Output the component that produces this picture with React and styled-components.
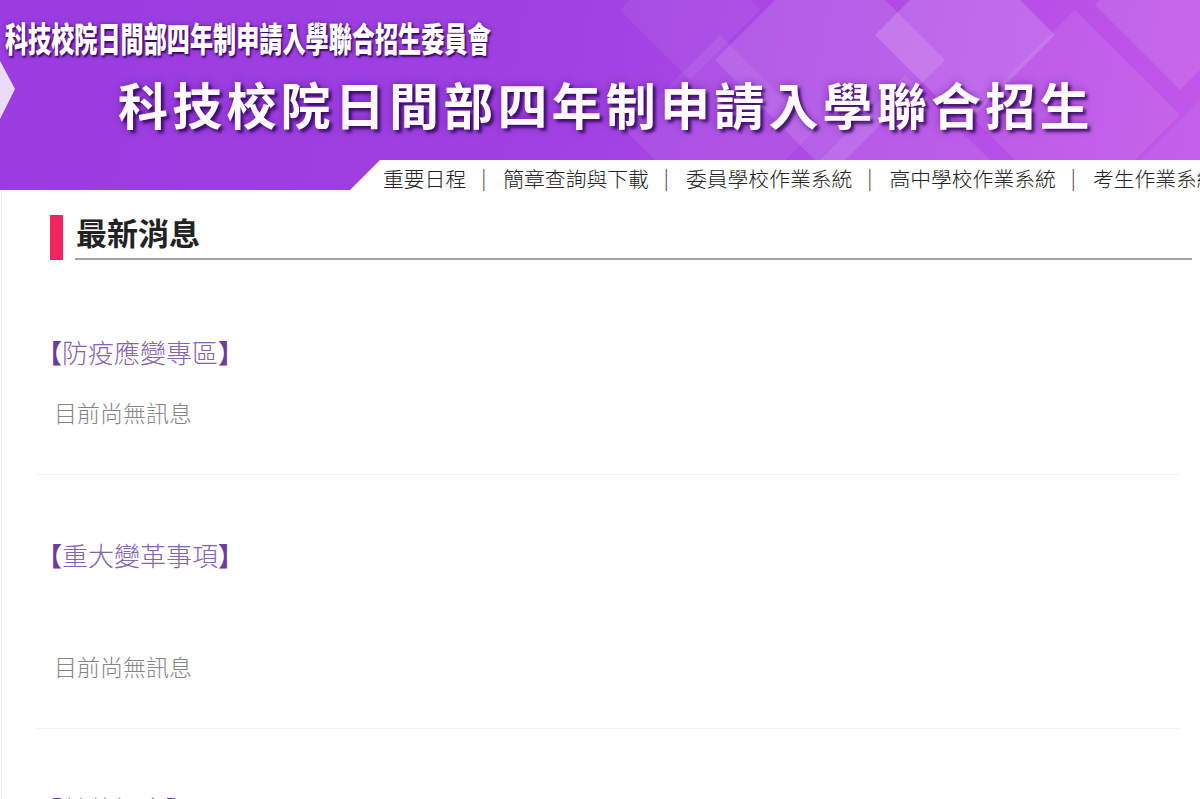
import React from 'react'
import styled, { createGlobalStyle } from 'styled-components'

const GlobalStyle = createGlobalStyle`
  html, body {
    margin: 0;
    padding: 0;
    background: #fff;
    overflow: hidden;
  }
  body {
    font-family: "Noto Sans CJK TC", "Noto Sans", sans-serif;
  }
`

const CJK = `"Noto Sans CJK TC", "Noto Sans CJK SC", "Noto Sans", sans-serif`

const Banner = styled.header`
  position: relative;
  height: 190px;
  background: linear-gradient(100deg, #9a3cdf 0%, #9f40e2 45%, #b24ce6 75%, #c257e9 100%);
  display: flex;
  flex-direction: column;
`

const BannerArt = styled.svg`
  position: absolute;
  inset: 0;
  width: 100%;
  height: 100%;
`

const SubTitle = styled.div`
  position: relative;
  margin: 20px 0 0 5px;
  font-family: ${CJK};
  font-size: 34px;
  line-height: 36px;
  font-weight: 900;
  color: #fff;
  white-space: nowrap;
  transform: scaleX(0.68);
  transform-origin: left center;
  text-shadow: 2px 2px 2px rgba(45, 0, 85, 0.85), 0 0 5px rgba(60, 0, 110, 0.5);
`

const MainTitle = styled.h1`
  position: relative;
  margin: 17px 0 0 118px;
  font-family: ${CJK};
  font-size: 50px;
  line-height: 60px;
  font-weight: 700;
  letter-spacing: 4.2px;
  color: #fdfbff;
  white-space: nowrap;
  text-shadow: 3px 3px 3px rgba(40, 0, 80, 0.75), 0 0 8px rgba(60, 0, 110, 0.45);
`

/* white tab with a slanted left edge, drawn by ::before */
const NavBar = styled.nav`
  position: relative;
  margin: auto 0 0 380px;
  height: 30px;
  background: #fff;
  display: flex;
  align-items: center;
  padding: 5px 0 0 3px;
  box-sizing: border-box;
  white-space: nowrap;

  &::before {
    content: '';
    position: absolute;
    left: -30px;
    top: 0;
    width: 30px;
    height: 30px;
    background: linear-gradient(to bottom right, transparent 49.5%, #fff 50.5%);
  }
`

const NavLink = styled.a`
  font-family: ${CJK};
  font-size: 20.8px;
  line-height: 24px;
  font-weight: 300;
  color: #222;
  text-decoration: none;
  flex-shrink: 0;
`

const NavSep = styled.span`
  font-family: ${CJK};
  font-size: 20px;
  line-height: 24px;
  font-weight: 300;
  color: #333;
  padding: 0 17px 0 15px;
  flex-shrink: 0;
`

const Main = styled.main`
  border-left: 1px solid #ececec;
  margin-left: 1px;
  padding: 25px 8px 0 0;
`

const SectionHeader = styled.div`
  display: flex;
  margin-left: 48px;
`

const Accent = styled.span`
  width: 13px;
  height: 45px;
  background: #f2245f;
  flex-shrink: 0;
`

const SectionTitle = styled.h2`
  flex: 1;
  margin: 0 0 0 12px;
  padding: 0 0 9px 1px;
  font-family: ${CJK};
  font-size: 31px;
  line-height: 34px;
  font-weight: 700;
  color: #222;
  border-bottom: 2px solid #a3a3a3;
`

const NewsList = styled.div`
  margin: 12px 12px 0 34px;
`

const NewsBlock = styled.section`
  padding: 62px 0 45px;
  border-bottom: 1px solid #f1f1f1;
`

const NewsTitle = styled.h3`
  margin: 0;
  font-family: ${CJK};
  font-size: 26px;
  line-height: 36px;
  font-weight: 300;
  color: #8563ad;
`

const Bracket = styled.span`
  color: #6a3c9d;
  font-weight: 700;
`

const Spacer = styled.div`
  height: ${p => p.$h}px;
`

const NewsBody = styled.p`
  margin: 25px 0 0;
  padding-left: 18px;
  font-family: ${CJK};
  font-size: 23px;
  line-height: 34px;
  font-weight: 300;
  color: #858585;
`

const diamonds = [
  { cx: 720, cy: 130, r: 95, o: 0.07 },
  { cx: 830, cy: 60, r: 115, o: 0.12 },
  { cx: 965, cy: 35, r: 90, o: 0.16 },
  { cx: 905, cy: 160, r: 85, o: 0.09 },
  { cx: 1075, cy: 115, r: 105, o: 0.08 },
  { cx: 1180, cy: 5, r: 85, o: 0.1 },
  { cx: 690, cy: 10, r: 70, o: 0.06 },
  { cx: 1200, cy: 170, r: 70, o: 0.06 },
]

const navItems = ['重要日程', '簡章查詢與下載', '委員學校作業系統', '高中學校作業系統', '考生作業系統']

const news = [
  { title: '防疫應變專區', body: '目前尚無訊息', extra: 0 },
  { title: '重大變革事項', body: '目前尚無訊息', extra: 51 },
  { title: '其他訊息', body: '目前尚無訊息', extra: 0 },
]

function BannerDecoration() {
  return (
    <BannerArt viewBox="0 0 1200 190" preserveAspectRatio="none">
      {diamonds.map((d, i) => (
        <polygon
          key={i}
          points={`${d.cx},${d.cy - d.r} ${d.cx + d.r},${d.cy} ${d.cx},${d.cy + d.r} ${d.cx - d.r},${d.cy}`}
          fill="#ffffff"
          fillOpacity={d.o}
        />
      ))}
      <polygon points="0,61 15,89 0,119" fill="#eadcf8" />
    </BannerArt>
  )
}

export default function App() {
  return (
    <>
      <GlobalStyle />
      <Banner>
        <BannerDecoration />
        <SubTitle>科技校院日間部四年制申請入學聯合招生委員會</SubTitle>
        <MainTitle>科技校院日間部四年制申請入學聯合招生</MainTitle>
        <NavBar>
          {navItems.map((item, i) => (
            <React.Fragment key={item}>
              {i > 0 && <NavSep>|</NavSep>}
              <NavLink href="#">{item}</NavLink>
            </React.Fragment>
          ))}
        </NavBar>
      </Banner>
      <Main>
        <SectionHeader>
          <Accent />
          <SectionTitle>最新消息</SectionTitle>
        </SectionHeader>
        <NewsList>
          {news.map(n => (
            <NewsBlock key={n.title}>
              <NewsTitle>
                <Bracket>【</Bracket>{n.title}<Bracket>】</Bracket>
              </NewsTitle>
              {n.extra > 0 && <Spacer $h={n.extra} />}
              <NewsBody>{n.body}</NewsBody>
            </NewsBlock>
          ))}
        </NewsList>
      </Main>
    </>
  )
}
